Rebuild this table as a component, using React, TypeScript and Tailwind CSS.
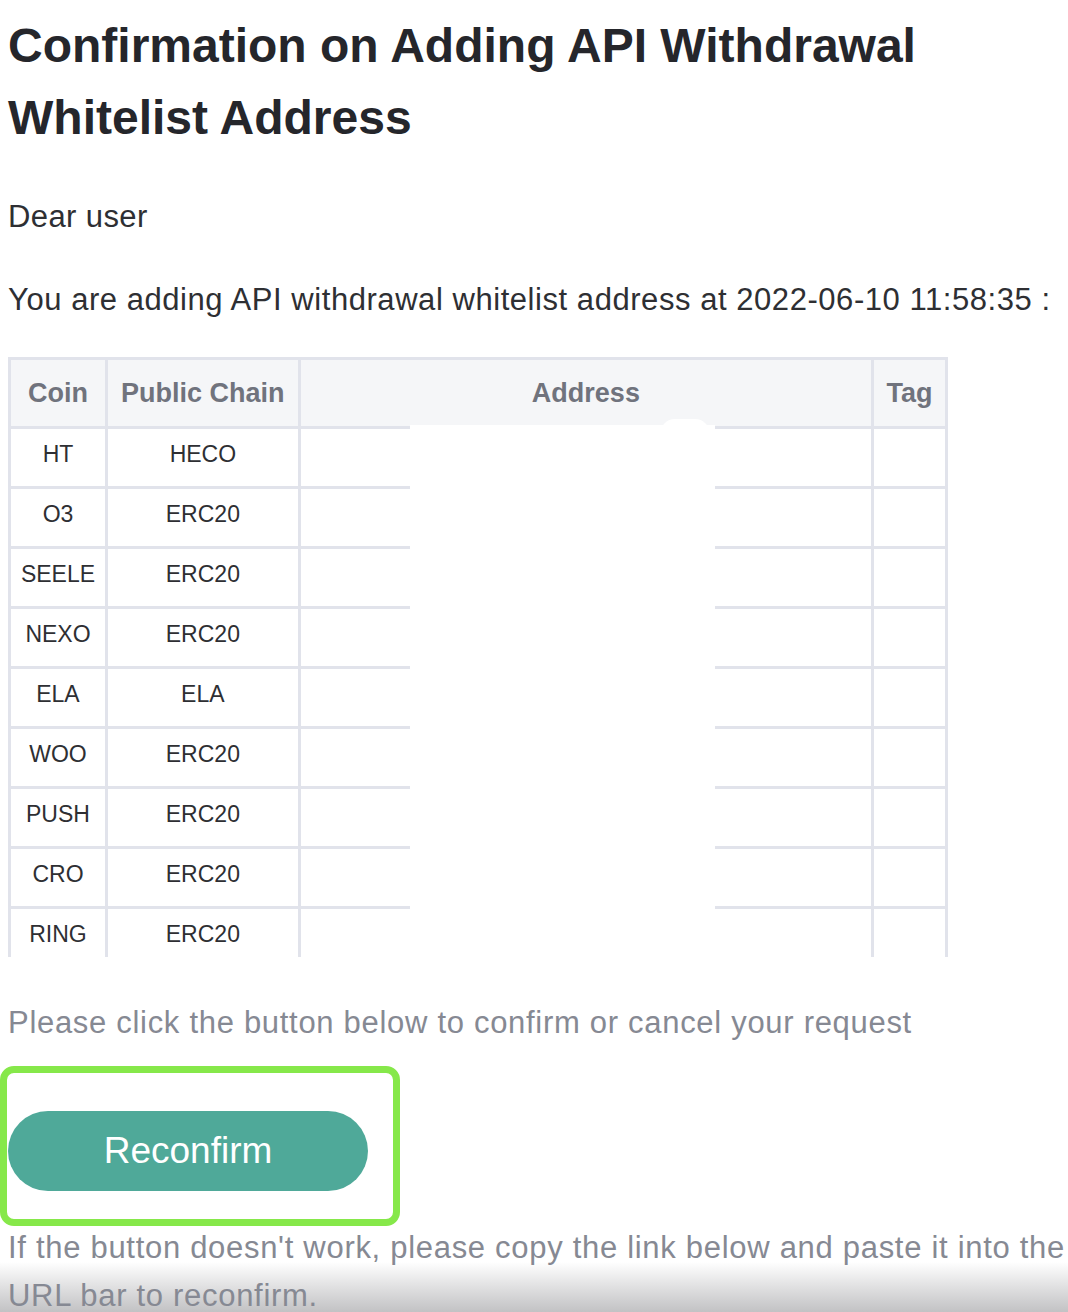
const rows = [
  ["HT", "HECO"],
  ["O3", "ERC20"],
  ["SEELE", "ERC20"],
  ["NEXO", "ERC20"],
  ["ELA", "ELA"],
  ["WOO", "ERC20"],
  ["PUSH", "ERC20"],
  ["CRO", "ERC20"],
  ["RING", "ERC20"],
];

export default function App() {
  return (
    <main className="relative w-[1068px] h-[1312px] overflow-hidden bg-white font-['Liberation_Sans',Arial,sans-serif]">
      {/* bottom fade, behind the text */}
      <div className="pointer-events-none absolute bottom-0 left-0 h-[50px] w-full bg-gradient-to-b from-white to-[#c2c2c4]" />

      <div className="relative pl-2 pt-[10px]">
        {/* TITLE */}
        <h1 className="text-[48px] leading-[72px] font-bold text-[#25262b]">
          Confirmation on Adding API Withdrawal
          <br />
          Whitelist Address
        </h1>

        {/* GREETING */}
        <p className="mt-[43px] text-[31px] leading-[40px] tracking-[0.4px] text-[#2e2f33]">Dear user</p>
        <p className="mt-[43px] text-[31px] leading-[40px] tracking-[0.55px] text-[#2e2f33] whitespace-nowrap">
          You are adding API withdrawal whitelist address at 2022-06-10 11:58:35 :
        </p>

        {/* TABLE */}
        <div className="relative mt-[37px] h-[600px] w-[940px] overflow-hidden">
          <table className="border-collapse border-[3px] border-[#e1e3eb] text-center">
            <thead>
              <tr className="h-[69px] bg-[#f5f6f8] text-[27px] font-bold text-[#70737d]">
                <th className="w-[97px] border-[3px] border-[#e1e3eb] font-bold">Coin</th>
                <th className="w-[193px] border-[3px] border-[#e1e3eb] font-bold">Public Chain</th>
                <th className="w-[574px] border-[3px] border-[#e1e3eb] font-bold">Address</th>
                <th className="w-[74px] border-[3px] border-[#e1e3eb] font-bold">Tag</th>
              </tr>
            </thead>
            <tbody>
              {rows.map(([coin, chain]) => (
                <tr key={coin} className="h-[60px] text-[23px] text-[#2e2f33]">
                  <td className="border-[3px] border-[#e1e3eb] pb-[6px]">{coin}</td>
                  <td className="border-[3px] border-[#e1e3eb] pb-[6px]">{chain}</td>
                  <td className="border-[3px] border-[#e1e3eb]"></td>
                  <td className="border-[3px] border-[#e1e3eb]"></td>
                </tr>
              ))}
            </tbody>
          </table>
          {/* redacted address patch */}
          <div className="absolute left-[402px] top-[68px] h-[540px] w-[305px] bg-white" />
          <div className="absolute left-[652px] top-[62px] h-[30px] w-[50px] rounded-full bg-white" />
        </div>

        {/* ACTIONS */}
        <p className="mt-[46px] text-[31px] leading-[40px] tracking-[0.7px] text-[#868993] whitespace-nowrap">
          Please click the button below to confirm or cancel your request
        </p>
        <div className="-ml-2 mt-[23px] w-[400px] h-[160px] rounded-[14px] border-[7px] border-[#86e84a] pt-[38px]">
          <button className="ml-[1px] h-[80px] w-[360px] rounded-full bg-[#4fa999] text-[37px] text-white">
            Reconfirm
          </button>
        </div>
        <p className="-mt-[2px] text-[31px] leading-[48px] tracking-[0.7px] text-[#868993] whitespace-nowrap">
          If the button doesn't work, please copy the link below and paste it into the
          <br />
          URL bar to reconfirm.
        </p>
      </div>
    </main>
  );
}
